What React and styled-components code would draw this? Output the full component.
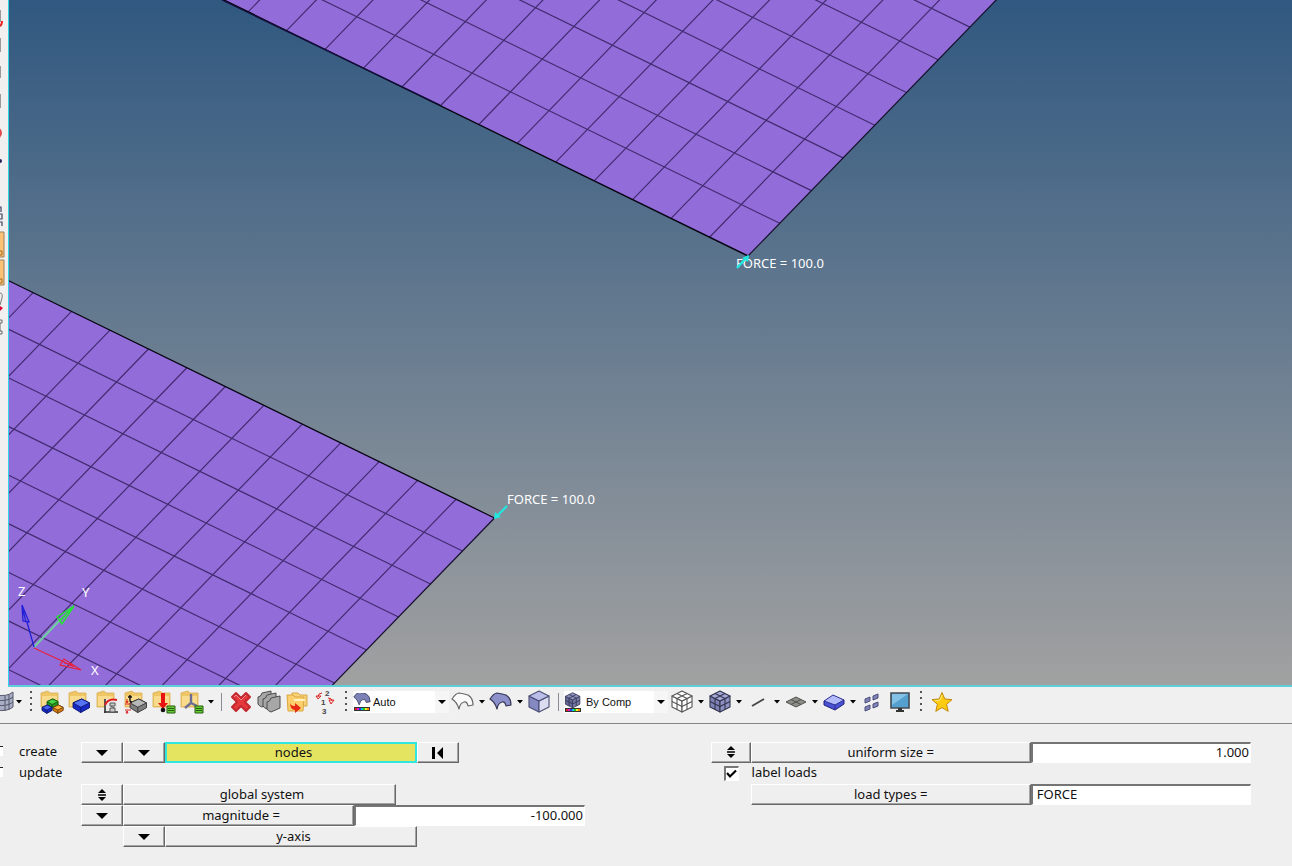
import React from "react";
import styled, { createGlobalStyle } from "styled-components";

const GlobalStyle = createGlobalStyle`
  * { box-sizing: border-box; }
  body { margin: 0; background: #efefef; color: #111; font: 13px/18px "Noto Sans", sans-serif; }
`;

const Page = styled.div`
  display: flex;
  flex-direction: column;
  min-height: 100vh;
`;
const Workspace = styled.main`
  display: flex;
  flex: 1;
  min-height: 400px;
`;
const SideTools = styled.aside`
  width: 8px;
  overflow: hidden;
  background: #f0f0f0;
`;
const Scene = styled.section`
  flex: 1;
  min-width: 0;
  display: flex;
  overflow: hidden;
  border-left: 1px solid #2bd8e6;
  border-bottom: 2px solid #5cd0d8;
  background: linear-gradient(#305880, #a1a1a1);
`;
const Canvas = styled.svg`
  flex: 1;
  display: block;
  height: 0;
  min-height: 100%;
  text { fill: #fff; font: 13px "Noto Sans", sans-serif; }
`;

const Toolbar = styled.nav`
  display: flex;
  align-items: center;
  height: 37px;
  padding-bottom: 6px;
  overflow: hidden;
  background: #f0f0f0;
  border-bottom: 1px solid #858585;
`;
const Tool = styled.button`
  flex: none;
  display: flex;
  align-items: center;
  justify-content: ${(p) => (p.$cut ? "flex-end" : "center")};
  width: ${(p) => (p.$cut ? 14 : 28)}px;
  height: 28px;
  padding: 0;
  border: 0;
  background: none;
  svg { flex: none; }
`;
const MenuArrow = styled.button`
  flex: none;
  display: flex;
  justify-content: center;
  align-items: center;
  width: 10px;
  height: 28px;
  padding: 0;
  border: 0;
  background: none;
`;
const Grip = styled.span`
  flex: none;
  width: 2px;
  height: 22px;
  margin: 0 6px;
  background: repeating-linear-gradient(#555 0 2px, transparent 2px 6px);
`;
const Divider = styled.span`
  flex: none;
  width: 1px;
  height: 18px;
  margin: 0 5px;
  background: #8b8b98;
`;
const Combo = styled.label`
  flex: none;
  display: flex;
  align-items: center;
  width: ${(p) => p.$w}px;
  height: 22px;
  background: linear-gradient(to left, #f6f6f6 14px, #fff 14px);
  select {
    flex: 1;
    min-width: 0;
    height: 20px;
    padding: 0 2px;
    border: 0;
    appearance: none;
    background: transparent;
    color: #111;
    font: 11px/16px "Liberation Sans", sans-serif;
  }
  svg { flex: none; }
  svg:last-child { margin-right: 3px; }
`;

const Panel = styled.form`
  display: grid;
  grid-template-columns: 11fr 9fr;
  min-height: 142px;
  padding: 18px 0 19px;
  background: #efefef;
`;
const Row = styled.div`
  display: flex;
  height: 21px;
`;
const Lead = styled.div`
  flex: none;
  width: 81px;
`;
const RadioLabel = styled.label`
  display: flex;
  align-items: center;
  gap: 16px;
  line-height: 18px;
`;
const Radio = styled.input`
  appearance: none;
  flex: none;
  width: 3px;
  height: 10px;
  margin: 0;
  background: #fff;
  border-top: 1px solid #222;
`;
const Key = styled.button`
  flex: none;
  display: flex;
  align-items: center;
  justify-content: center;
  width: ${(p) => p.$w || 42}px;
  padding: 0 0 ${(p) => (p.$w ? 2 : 0)}px ${(p) => (p.$w ? 5 : 0)}px;
  border: 1px solid #686868;
  border-top-color: #fff;
  border-left-color: #fff;
  box-shadow: inset -1px -1px #a4a4a4;
  background: #efefef;
  color: #111;
  font: 13px/18px "Noto Sans", sans-serif;
`;
const SelectedKey = styled(Key)`
  border: 2px solid #30e6e0;
  box-shadow: none;
  background: #e5e461;
`;
const Spacer = styled.div`
  flex: none;
  width: 42px;
`;
const Field = styled.input`
  min-width: 0;
  width: ${(p) => (p.$w ? p.$w + "px" : "100%")};
  height: 21px;
  padding: 0 1px 2px 4px;
  border: solid #747474;
  border-width: 2px 1px 1px 2px;
  border-right-color: #fff;
  border-bottom-color: #fff;
  border-radius: 0;
  background: #fff;
  color: #111;
  font: 13px/16px "Noto Sans", sans-serif;
  text-align: ${(p) => (p.$right ? "right" : "left")};
`;
const Display = styled.div`
  display: grid;
  grid-template-columns: 40px 280fr 220fr;
  grid-auto-rows: 21px;
  align-content: start;
  padding-right: 41px;
`;
const FillKey = styled(Key)`
  width: auto;
  padding: 0 0 2px;
`;
const Tick = styled.label`
  grid-column: 1 / -1;
  display: flex;
  align-items: flex-start;
  gap: 13px;
  padding-left: 13px;
  line-height: 18px;
`;
const TickBox = styled.span`
  display: grid;
  width: 15px;
  height: 15px;
  margin-top: 3px;
  input, svg { grid-area: 1 / 1; margin: 0; }
  input {
    appearance: none;
    width: 15px;
    height: 15px;
    background: #fff;
    border: solid #fff;
    border-width: 2px 1px 1px 2px;
    border-top-color: #777;
    border-left-color: #777;
  }
  svg { pointer-events: none; visibility: hidden; }
  input:checked + svg { visibility: visible; }
`;

/* ---------- mesh ---------- */
const U = [-38.45, -18.78];
function Plate({ tip, v, edge, nu, nv }) {
  const at = (i, j) => [tip[0] + U[0] * i + v[0] * j, tip[1] + U[1] * i + v[1] * j];
  const seg = (a, b) => `M${a[0]} ${a[1]}L${b[0]} ${b[1]}`;
  let d = "";
  for (let i = 1; i <= nu; i++) d += seg(at(i, 0), at(i, nv));
  for (let j = 1; j <= nv; j++) d += seg(at(0, j), at(nu, j));
  const corners = [at(0, 0), at(nu, 0), at(nu, nv), at(0, nv)];
  return (
    <g fill="none">
      <polygon points={corners.map((c) => c.join()).join(" ")} fill="#926dda" />
      <path d={d} stroke="#432b70" strokeWidth="1.2" />
      <path d={seg(at(0, 0), at(0, nv))} stroke="#15102a" strokeWidth="1.2" />
      <path d={seg(at(0, 0), at(nu, 0))} stroke="#080512" strokeWidth={edge} />
    </g>
  );
}

function Model() {
  return (
    <Canvas role="img" aria-label="Mesh view">
      <g transform="translate(-9 0)">
        <Plate tip={[748, 256]} v={[31.7, -32.7]} edge={1.5} nu={24} nv={30} />
        <path d="M222 0 L440 105" stroke="#151040" strokeWidth="1.3" />
        <Plate tip={[494.5, 518]} v={[-32, 33]} edge={1.3} nu={24} nv={16} />
        <path d="M495 518L507 506" stroke="#22e6e0" strokeWidth="2.2" />
        <path d="M494 519l1-7 6 5z" fill="#22e6e0" />
        <text x="736" y="268">FORCE = 100.0</text>
        <path d="M748 256L737 268" stroke="#22e6e0" strokeWidth="2.4" />
        <path d="M749 255l-1 7-6-4z" fill="#22e6e0" />
        <text x="507" y="504">FORCE = 100.0</text>
        <g fill="none">
          <path d="M34 647L60 620" stroke="#6fd0a0" strokeWidth="2" />
          <path d="M60 620L74 606M74 606L57 617L62 624ZM60 621l8-9" stroke="#22e432" strokeWidth="1.4" />
          <path d="M34 647L27 622M22 605L23 621L29 622ZM26 622l-3-12" stroke="#2020d8" strokeWidth="1.3" />
          <path d="M34 648L62 661M81 670L64 659L60 665ZM62 661l12 6M64 663l10 2" stroke="#e8203c" strokeWidth="1.2" />
        </g>
        <text x="18" y="596">Z</text>
        <text x="82" y="597">Y</text>
        <text x="91" y="675">X</text>
      </g>
    </Canvas>
  );
}

/* ---------- icons ---------- */
const Icon = ({ children, size = 24, ...rest }) => (
  <svg width={size} height={size} viewBox={`0 0 ${size} ${size}`} fill="none" aria-hidden="true" {...rest}>
    {children}
  </svg>
);
const Tri = () => (
  <svg width="6" height="4" viewBox="0 0 6 4" aria-hidden="true"><path d="M0 0h6L3 3.6z" fill="#000" /></svg>
);
const WideTri = ({ w = 12 }) => (
  <svg width={w} height="6" viewBox="0 0 12 6" aria-hidden="true"><path d="M0 0h12L6 6z" fill="#000" /></svg>
);
const UpDown = () => (
  <svg width="8" height="12" viewBox="0 0 8 12" aria-hidden="true">
    <path d="M4 0l4 4H0zM4 12l4-4H0zM0 5.2h8v1.5H0z" fill="#000" />
  </svg>
);
const Folder = () => (
  <g>
    <path d="M1 3l7-2 2 2h8v14H1z" fill="#efc665" stroke="#d9ae50" strokeWidth=".8" />
    <path d="M2 6h15v10H2z" fill="#f9db8e" />
  </g>
);
const Block = ({ x, y, s = 1, top, side, line }) => (
  <g transform={`translate(${x} ${y}) scale(${s})`} stroke={line} strokeWidth={0.9 / s} strokeLinejoin="round">
    <path d="M0 4L9 0L17 4V9L8 14L0 9Z" fill={side} />
    <path d="M0 4L9 0L17 4L8 8.5Z" fill={top} />
    <path d="M8 8.5V14" />
  </g>
);
const Cube = ({ fill, top, side, grid, line = "#33334d" }) => (
  <g stroke={line} strokeWidth="1.1" strokeLinejoin="round">
    <path d="M2 6L12 11V22L2 17Z" fill={fill} />
    <path d="M12 11L22 6V17L12 22Z" fill={side} />
    <path d="M12 1L22 6L12 11L2 6Z" fill={top} />
    {grid && <path d="M2 11.5L12 16.5L22 11.5M7 8.5V19.5M17 8.5V19.5M7 3.5L17 8.5M17 3.5L7 8.5" fill="none" />}
  </g>
);
const Surface = ({ fill, line }) => (
  <g stroke={line} strokeWidth="1.2" strokeLinejoin="round">
    <path d="M1 9Q5 3 8 3Q14 4 17 5Q22 8 22 15L17 16Q16 11 13 12Q9 13 8 19Q6 12 1 9Z" fill={fill} />
  </g>
);
const Spectrum = ({ y }) => (
  <g>
    <path d={`M1 ${y}h16v4H1z`} fill="#333" />
    {["#e22", "#c2c", "#33e", "#0cc", "#2c2", "#ee2", "#f80"].map((c, i) => (
      <path key={c} d={`M${2 + i * 2} ${y + 1}h2v2h-2z`} fill={c} />
    ))}
  </g>
);

const icons = {
  mesh: (
    <Icon>
      <path d="M6 5Q17 7 23 2V17Q17 22 6 20Z" fill="#a9adc5" stroke="#55586b" />
      <path d="M6 10Q17 12 23 7M6 15Q17 17 23 12M15 6V21M19 5V20" stroke="#55586b" />
    </Icon>
  ),
  comps: (
    <Icon>
      <Folder />
      <Block x={7} y={9} s={0.65} top="#48d548" side="#209a20" line="#145914" />
      <Block x={2} y={15} s={0.6} top="#4862f4" side="#1829c4" line="#101a70" />
      <Block x={13} y={15} s={0.6} top="#ffb13b" side="#d77b12" line="#6d4010" />
    </Icon>
  ),
  prop: <Icon><Folder /><Block x={5} y={9} s={0.97} top="#5474f6" side="#1729c2" line="#0c1670" /></Icon>,
  material: (
    <Icon>
      <Folder />
      <path d="M8 9h13v14H8z" fill="#e9e9e9" />
      <path d="M9 23V9M8 22h14" stroke="#333" strokeWidth="1.6" />
      <path d="M9 15Q12 8 21 10" stroke="#e31b1b" strokeWidth="2" />
      <path d="M14 13h5v3h-5zM14 18h5v4h-5zM15 16l3 2" stroke="#555" fill="#ccc" />
    </Icon>
  ),
  thickness: (
    <Icon>
      <Folder />
      <Block x={6} y={9} s={0.97} top="#b7b7b7" side="#7e7e7e" line="#333" />
      <path d="M6 5v6q0 1 2 1M4 7h4" stroke="#111" strokeWidth="1.4" />
      <path d="M1 14h6M1 20h6M3 9v4M3 21v3M2 11l1 2 1-2M2 23l1-2 1 2" stroke="#d22" />
    </Icon>
  ),
  load: (
    <Icon>
      <Folder />
      <path d="M9 3h4v10h3l-5 6-5-6h3z" fill="#e81414" />
      <circle cx="11" cy="20" r="2.3" fill="#111" />
      <path d="M15 16h8v7h-8z" fill="#6c3" stroke="#285d14" /><path d="M16 18.5h6M16 20.5h6" stroke="#285d14" />
    </Icon>
  ),
  system: (
    <Icon>
      <Folder />
      <path d="M11 4V13L5 18M11 13L17 16" stroke="#6b6e92" strokeWidth="2.4" />
      <path d="M15 16h8v7h-8z" fill="#6c3" stroke="#285d14" /><path d="M16 18.5h6M16 20.5h6" stroke="#285d14" />
    </Icon>
  ),
  remove: (
    <Icon>
      <path d="M3 7L7 3L12 8L17 3L21 7L16 12L21 17L17 21L12 16L7 21L3 17L8 12Z" fill="#e5383c" stroke="#c22a30" strokeWidth="2" strokeLinejoin="round" />
      <path d="M5 7l2-2 5 5 5-5" stroke="#f58b8b" />
    </Icon>
  ),
  organize: (
    <Icon>
      {[[-1, 0], [4, 2], [8, 5]].map(([x, y]) => (
        <path key={x} transform={`translate(${x} ${y})`} d="M2 7Q5 7 6 3L15 1V13L6 17Q3 16 2 14Z" fill="#a7a7a7" stroke="#4b4b4b" strokeLinejoin="round" />
      ))}
    </Icon>
  ),
  move: (
    <Icon>
      <path d="M7 3h6l2 2h7v11H7z" fill="#f7d47c" stroke="#dba740" />
      <path d="M2 5h6l2 2h9l-1 14H3z" fill="#fbcf6c" stroke="#dba740" />
      <path d="M9 10h11" stroke="#fff0bd" strokeWidth="2" />
      <path d="M5 12q0 4 5 4v-3l6 5-6 5v-3q-5 0-5-8z" fill="#e62a16" />
    </Icon>
  ),
  renumber: (
    <Icon size={28}>
      <g fontFamily="Liberation Sans" fontWeight="700" fontSize="8" fill="#444">
        <text x="14" y="8">2</text><text x="10" y="17">1</text><text x="11" y="26">3</text>
      </g>
      <path d="M11 5Q7 5 7 9M5 8l2 3 3-3zM17 10q4 0 4 3M18 12h5l-3 4z" stroke="#d22" fill="none" />
    </Icon>
  ),
  wireSurface: <Icon><Surface fill="#fafafa" line="#666" /></Icon>,
  shadedSurface: <Icon><Surface fill="#8c90cb" line="#353754" /></Icon>,
  solid: <Icon><Cube fill="#8589c2" top="#b9bde8" side="#dcdcf0" line="#4b4d75" /></Icon>,
  wireCube: <Icon><Cube fill="#fff" top="#fff" side="#fff" grid line="#555" /></Icon>,
  meshCube: <Icon><Cube fill="#7e83b6" top="#a5a9d8" side="#8d91c2" grid /></Icon>,
  line: <Icon><path d="M6 16L18 9" stroke="#444" strokeWidth="1.8" /></Icon>,
  diamond: (
    <Icon><path d="M2 12L12 7L22 12L12 17ZM7 9.5L17 14.5M17 9.5L7 14.5" fill="#8e8e88" stroke="#50504c" /></Icon>
  ),
  plate: (
    <Icon><path d="M2 11v4l11 5 9-6v-4z" fill="#4a53d4" stroke="#20207a" /><path d="M2 11L11 5L22 10L13 15ZM13 15v5" fill="#b3bbfb" stroke="#2c2c92" /></Icon>
  ),
  shrink: (
    <Icon>
      {[[5, 7], [13, 4], [5, 15], [13, 12]].map(([x, y]) => (
        <path key={x + "-" + y} transform={`translate(${x} ${y})`} d="M0 2L5 0V4L0 6Z" fill="#8084b8" stroke="#4a4d79" />
      ))}
    </Icon>
  ),
  monitor: (
    <Icon>
      <path d="M3 3h18v15H3z" fill="#56a0d0" stroke="#444b52" strokeWidth="1.6" />
      <path d="M4 4h16L4 15z" fill="#83c1e6" />
      <path d="M10 18h4v3h-4zM8 20h8v2H8z" fill="#333" />
    </Icon>
  ),
  star: (
    <Icon>
      <path d="M12 2.5L14.8 9L22 9.6L16.6 14.3L18.2 21.3L12 17.6L5.8 21.3L7.4 14.3L2 9.6L9.2 9Z" fill="#fccb12" stroke="#c48708" strokeLinejoin="round" />
      <path d="M12 5L10 10L5 11" stroke="#ffed85" />
    </Icon>
  ),
};

const ToolItem = ({ icon, label, menu, cut }) => (
  <>
    <Tool type="button" aria-label={label} $cut={cut}>{icons[icon]}</Tool>
    {menu && <MenuArrow type="button" aria-label={label + " options"}><Tri /></MenuArrow>}
  </>
);

const SideIcons = () => (
  <svg width="8" height="350" viewBox="0 0 8 350" fill="none" aria-hidden="true">
    <path d="M0 10v12M0 38v14M0 66v12M0 94v14" stroke="#999" strokeWidth="2" />
    <path d="M0 26Q2 25 2 21" stroke="#e22" strokeWidth="2" />
    <circle cx="-4" cy="133" r="6" fill="#e34a50" />
    <circle cx="0" cy="161" r="2" fill="#225" />
    <path d="M0 207h1v5M0 214h2v5H0M0 222h2v4" stroke="#446" strokeWidth="1.2" />
    <path d="M-2 232h6v25h-6zM-2 260h6v25h-6z" fill="#fbc276" stroke="#9b8158" />
    <path d="M0 251h2v4H0M0 279h2v4H0" stroke="#a36d20" />
    <path d="M0 293q3 0 2 5l-2 7" stroke="#777" />
    <path d="M0 306l3 2-3 3z" fill="#d03" />
    <path d="M0 320h2v3H0v8h2v3H0" stroke="#666" />
  </svg>
);

function MainToolbar() {
  return (
    <Toolbar aria-label="Display">
      <ToolItem icon="mesh" label="Mesh" menu cut />
      <Grip />
      <ToolItem icon="comps" label="Components" />
      <ToolItem icon="prop" label="Properties" />
      <ToolItem icon="material" label="Materials" />
      <ToolItem icon="thickness" label="Thickness" />
      <ToolItem icon="load" label="Load collectors" />
      <ToolItem icon="system" label="Systems" menu />
      <Divider />
      <ToolItem icon="remove" label="Delete" />
      <ToolItem icon="organize" label="Organize" />
      <ToolItem icon="move" label="Move" />
      <ToolItem icon="renumber" label="Renumber" />
      <Grip />
      <Combo $w={96}>
        <Icon size={18}>
          <g transform="translate(0 -3) scale(.78)"><Surface fill="#7c82b5" line="#44486c" /></g>
          <Spectrum y={14} />
        </Icon>
        <select aria-label="Geometry colour"><option>Auto</option></select>
        <WideTri w={8} />
      </Combo>
      <ToolItem icon="wireSurface" label="Wireframe geometry" menu />
      <ToolItem icon="shadedSurface" label="Shaded geometry" menu />
      <ToolItem icon="solid" label="Solids" />
      <Divider />
      <Combo $w={104}>
        <Icon size={20}>
          <g transform="scale(.72)"><Cube fill="#646998" top="#8c92c2" side="#767baa" grid /></g>
          <Spectrum y={16} />
        </Icon>
        <select aria-label="Element colour"><option>By Comp</option></select>
        <WideTri w={8} />
      </Combo>
      <ToolItem icon="wireCube" label="Wireframe elements" menu />
      <ToolItem icon="meshCube" label="Shaded elements" menu />
      <ToolItem icon="line" label="1D elements" menu />
      <ToolItem icon="diamond" label="2D elements" menu />
      <ToolItem icon="plate" label="3D elements" menu />
      <ToolItem icon="shrink" label="Shrink elements" />
      <ToolItem icon="monitor" label="Visualization" />
      <Grip />
      <ToolItem icon="star" label="Favorites" />
    </Toolbar>
  );
}

export default function App() {
  return (
    <Page>
      <GlobalStyle />
      <Workspace>
        <SideTools><SideIcons /></SideTools>
        <Scene><Model /></Scene>
      </Workspace>
      <MainToolbar />
      <Panel>
        <div>
          <Row>
            <Lead><RadioLabel><Radio type="radio" name="mode" defaultChecked />create</RadioLabel></Lead>
            <Key type="button" aria-label="Entity options"><WideTri /></Key>
            <Key type="button" aria-label="Entity type"><WideTri /></Key>
            <SelectedKey type="button" $w={252}>nodes</SelectedKey>
            <Key type="button" aria-label="Reset selection">
              <svg width="12" height="12" viewBox="0 0 12 12" aria-hidden="true"><path d="M0 0h3v12H0zM11 0v12L5 6z" fill="#000" /></svg>
            </Key>
          </Row>
          <Row><Lead><RadioLabel><Radio type="radio" name="mode" />update</RadioLabel></Lead></Row>
          <Row>
            <Lead />
            <Key type="button" aria-label="Switch system"><UpDown /></Key>
            <Key type="button" $w={273}>global system</Key>
          </Row>
          <Row>
            <Lead />
            <Key type="button" aria-label="Magnitude method"><WideTri /></Key>
            <Key type="button" $w={231}>magnitude =</Key>
            <Field $w={231} $right aria-label="magnitude" defaultValue="-100.000" />
          </Row>
          <Row>
            <Lead />
            <Spacer />
            <Key type="button" aria-label="Direction"><WideTri /></Key>
            <Key type="button" $w={252}>y-axis</Key>
          </Row>
        </div>
        <Display>
          <FillKey type="button" aria-label="Switch size mode"><UpDown /></FillKey>
          <FillKey type="button">uniform size =</FillKey>
          <Field $right aria-label="uniform size" defaultValue="1.000" />
          <Tick>
            <TickBox>
              <input type="checkbox" defaultChecked />
              <svg width="15" height="15" viewBox="0 0 15 15" aria-hidden="true"><path d="M3 7L6 10.500L12 4.500" fill="none" stroke="#000" strokeWidth="2.200" /></svg>
            </TickBox>
            label loads
          </Tick>
          <span />
          <FillKey type="button">load types =</FillKey>
          <Field aria-label="load types" defaultValue="FORCE" />
        </Display>
      </Panel>
    </Page>
  );
}
